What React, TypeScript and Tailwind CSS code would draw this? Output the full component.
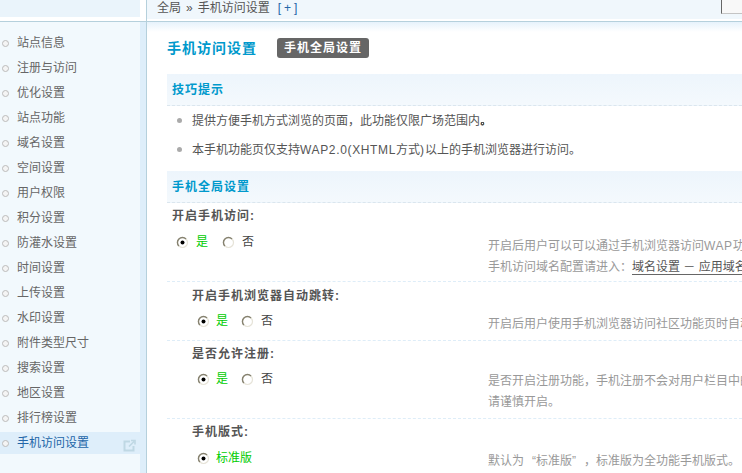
const items = ["站点信息","注册与访问","优化设置","站点功能","域名设置","空间设置","用户权限","积分设置","防灌水设置","时间设置","上传设置","水印设置","附件类型尺寸","搜索设置","地区设置","排行榜设置","手机访问设置"];

function Radio({ checked }: { checked?: boolean }) {
  return (
    <svg width="13" height="13" viewBox="0 0 13 13" className="shrink-0">
      <circle cx="6.5" cy="6.5" r="5" fill="#fff" stroke="#e6e3d8" strokeWidth="1.2" />
      <path d="M2.9 10 A5 5 0 0 1 10 2.9" fill="none" stroke="#85816f" strokeWidth="1.4" />
      {checked && <circle cx="6.5" cy="6.5" r="2" fill="#000" />}
    </svg>
  );
}

function Radios({ first, gapA, gapB, gapC }: { first: string; gapA: string; gapB: string; gapC: string }) {
  return (
    <div className="flex h-[16px] items-center">
      <Radio checked />
      <span className={`${gapA} text-[#00cc00]`}>{first}</span>
      {first === "是" && (
        <>
          <span className={gapB}><Radio /></span>
          <span className={`${gapC} text-[#444]`}>否</span>
        </>
      )}
    </div>
  );
}

function SectionHead({ text }: { text: string }) {
  return (
    <div className="flex h-[32px] items-center border-b border-dashed border-[#dbe6ee] bg-[linear-gradient(#edf5fc,#f4f9fd)] pl-[5px] text-[12px] font-bold tracking-[1px] text-[#0099cc]">
      {text}
    </div>
  );
}

function Row({ h, label, labelH, indent, radios, lines, descTop, last }: { h: string; label: string; labelH: string; indent: string; radios: React.ReactNode; lines: React.ReactNode[]; descTop: string; last?: boolean }) {
  return (
    <div className={`flex ${h} ${last ? "" : "border-b border-dashed border-[#deedf8]"}`}>
      <div className={`w-[321px] shrink-0 ${indent}`}>
        <div className={`flex ${labelH} items-center font-bold tracking-[1px] text-[#555]`}>{label}</div>
        {radios}
      </div>
      <div className={`${descTop} whitespace-nowrap leading-[21px] text-[#999]`}>
        {lines.map((l, i) => <div key={i}>{l}</div>)}
      </div>
    </div>
  );
}

export default function App() {
  return (
    <div className="flex h-[473px] w-[742px] overflow-hidden bg-white font-['Liberation_Sans','Noto_Sans_CJK_SC',sans-serif] text-[12px] text-[#666]">
      <aside className="flex w-[147px] shrink-0 flex-col border-r border-[#b5d0dc]">
        <div className="h-[22px] shrink-0 border-b border-[#b5d0dc]">
          <div className="h-[17px] w-[140px] bg-[#eaf4fb]" />
        </div>
        <div className="flex flex-1">
          <nav className="w-[140px] bg-[#f2f9fd] pt-[10px]">
            {items.map((t, i) => {
              const active = i === items.length - 1;
              return (
                <div key={t} className={`mb-[3px] flex h-[22px] items-center ${active ? "bg-[#deeefa] text-[#2366a8]" : ""}`}>
                  <span className="ml-[2px] h-[7px] w-[7px] shrink-0 rounded-full border border-[#bbb] bg-[#f4f4f4]" />
                  <span className="ml-[8px]">{t}</span>
                  {active && (
                    <svg width="13" height="13" viewBox="0 0 13 13" fill="none" stroke="#bfd8e4" strokeWidth="2" className="ml-auto mr-[4px] mt-[5px]">
                      <path d="M7 2.5H1.5V11.5H10.5V7" />
                      <path d="M6 7.5L11 2.5M8 1.5h4v4" strokeWidth="1.6" />
                    </svg>
                  )}
                </div>
              );
            })}
          </nav>
          <div className="w-[6px] bg-[#deeefa]" />
        </div>
      </aside>
      <main className="relative min-w-0 flex-1">
        <div className="relative h-[22px] border-b border-[#b5d0dc]">
          <div className="flex h-[19px] items-center whitespace-nowrap bg-[#f0f7fc] pb-[7px] pl-[10px] pt-[4px] text-[#555]">
            全局<span className="mx-[5px]">»</span>手机访问设置<a className="ml-[8px] tracking-[3px] text-[#2366a8]">[+]</a>
          </div>
          <div className="absolute right-0 top-0 h-[14px] w-[21px] border-b border-l border-b-[#c4c4c4] border-l-[#666] bg-[#f8f8f8]" />
        </div>
        <div className="bg-[linear-gradient(#e6f2fb,#ffffff_10px)] pl-[20px] pt-[16px]">
          <div className="flex h-[20px] items-center">
            <h1 className="text-[14px] font-bold tracking-[1px] text-[#0099cc]">手机访问设置</h1>
            <span className="ml-[20px] flex h-[20px] w-[92px] items-center justify-center rounded-[3px] bg-[#666] font-bold tracking-[1px] text-white">手机全局设置</span>
          </div>
          <div className="mt-[16px]">
            <SectionHead text="技巧提示" />
            <ul className="pb-[7px] text-[#555]">
              <li className="flex h-[29px] items-center whitespace-nowrap pl-[10px]">
                <span className="h-[5px] w-[5px] shrink-0 rounded-full bg-[#aaa]" />
                <span className="ml-[10px]">提供方便手机方式浏览的页面，此功能仅限广场范围内。</span>
              </li>
              <li className="flex h-[29px] items-center whitespace-nowrap pl-[10px]">
                <span className="h-[5px] w-[5px] shrink-0 rounded-full bg-[#aaa]" />
                <span className="ml-[10px]">本手机功能页仅支持<span className="tracking-[0.65px]">WAP2.0(XHTML</span>方式<span className="mr-[1px]">)</span>以上的手机浏览器进行访问。</span>
              </li>
            </ul>
            <SectionHead text="手机全局设置" />
            <Row h="h-[79px]" labelH="h-[26px]" label="开启手机访问:" indent="pl-[5px]" descTop="pt-[33px]"
              radios={<div className="mt-[5px] pl-[4px]"><Radios first="是" gapA="ml-[7px]" gapB="ml-[14px]" gapC="ml-[7px]" /></div>}
              lines={[<>开启后用户可以可以通过手机浏览器访问<span className="tracking-[0.6px]">WAP</span>功能。</>, <>手机访问域名配置请进入：<span className="border-b border-[#666] text-[#555]">域名设置 － 应用域名</span></>]} />
            <Row h="h-[59px]" labelH="h-[28px]" label="开启手机浏览器自动跳转:" indent="pl-[25px]" descTop="pt-[32px]"
              radios={<div className="mt-[3px] pl-[5px]"><Radios first="是" gapA="ml-[6px]" gapB="ml-[13px]" gapC="ml-[7px]" /></div>}
              lines={["开启后用户使用手机浏览器访问社区功能页时自动跳转。"]} />
            <Row h="h-[78px]" labelH="h-[26px]" label="是否允许注册:" indent="pl-[25px]" descTop="pt-[30px]"
              radios={<div className="mt-[4px] pl-[5px]"><Radios first="是" gapA="ml-[6px]" gapB="ml-[13px]" gapC="ml-[7px]" /></div>}
              lines={["是否开启注册功能，手机注册不会对用户栏目中的数据造成影响，", "请谨慎开启。"]} />
            <Row h="h-[54px]" last labelH="h-[26px]" label="手机版式:" indent="pl-[25px]" descTop="pt-[32px]"
              radios={<div className="mt-[5px] pl-[5px]"><Radios first="标准版" gapA="ml-[6px]" gapB="" gapC="" /></div>}
              lines={[<>默认为<span className="inline-block w-[12px] text-right">“</span>标准版<span className="inline-block w-[12px] text-left">”</span>，标准版为全功能手机版式。</>]} />
          </div>
        </div>
        <span className="absolute left-[334px] top-[122px] h-[3px] w-[3px] border border-[#555] bg-white" />
      </main>
    </div>
  );
}
